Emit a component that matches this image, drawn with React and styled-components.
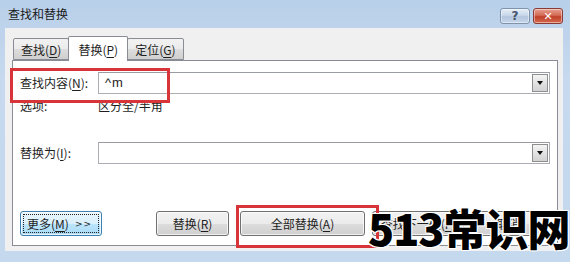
import React from 'react';
import styled, { createGlobalStyle } from 'styled-components';

const Global = createGlobalStyle`
  html, body { margin: 0; padding: 0; }
  body {
    font-family: "Noto Sans CJK SC", "Microsoft YaHei", sans-serif;
    font-size: 12px;
    color: #1e1e1e;
  }
`;

const Frame = styled.div`
  position: relative;
  width: 570px;
  height: 262px;
  box-sizing: border-box;
  background: linear-gradient(180deg, #b9d0ea 0%, #c6d9ee 30%, #c4d8ee 100%);
  display: flex;
  flex-direction: column;
  overflow: hidden;
`;

const TitleBar = styled.div`
  height: 28px;
  display: flex;
  align-items: flex-start;
  justify-content: space-between;
  padding: 0 7px 0 8px;
`;

const Title = styled.div`
  margin-top: 6px;
  font-size: 12px;
  line-height: 16px;
  color: #1a1a1a;
`;

const Caption = styled.div`
  display: flex;
  gap: 3px;
  margin-top: 8px;
`;

const CapButton = styled.div`
  width: 30px;
  height: 16px;
  box-sizing: border-box;
  border: 1px solid ${p => (p.$close ? '#8a3a34' : '#7f93ad')};
  border-radius: 3px;
  background: ${p =>
    p.$close
      ? 'linear-gradient(180deg, #e8a08f 0%, #d46a55 45%, #c0402a 55%, #d46a50 100%)'
      : 'linear-gradient(180deg, #e4edf7 0%, #c9d8ea 45%, #b3c6de 55%, #c7d7ea 100%)'};
  display: flex;
  align-items: center;
  justify-content: center;
  color: ${p => (p.$close ? '#fff' : '#44546b')};
  font-family: "DejaVu Sans", sans-serif;
  font-weight: bold;
  font-size: ${p => (p.$close ? '11px' : '12px')};
  line-height: 1;
  box-shadow: inset 0 0 0 1px rgba(255,255,255,0.45);
`;

const Body = styled.div`
  position: relative;
  margin: 0 7px 0 5px;
  height: 223px;
  background: #f0f0f0;
  padding: 8px 5px 0 7px;
  box-sizing: border-box;
  display: flex;
  flex-direction: column;
`;

const Tabs = styled.div`
  display: flex;
  align-items: flex-end;
  height: 24px;
  padding-left: 1px;
`;

const Tab = styled.div`
  height: ${p => (p.$active ? '25px' : '22px')};
  margin-bottom: ${p => (p.$active ? '-1px' : '0')};
  padding: 0 ${p => (p.$active ? '9px' : '7px')};
  box-sizing: border-box;
  border: 1px solid #898c95;
  border-bottom: ${p => (p.$active ? 'none' : '1px solid #898c95')};
  margin-left: ${p => (p.$active ? '-1px' : '0')};
  margin-right: ${p => (p.$active ? '-1px' : '0')};
  background: ${p => (p.$active ? '#ffffff' : 'linear-gradient(180deg, #f2f2f2 0%, #ebebeb 50%, #dddddd 51%, #cfcfcf 100%)')};
  display: flex;
  align-items: center;
  white-space: nowrap;
  font-size: 12px;
  position: relative;
  z-index: ${p => (p.$active ? 2 : 1)};
  border-radius: 2px 2px 0 0;
`;

const Key = styled.span`
  text-decoration: underline;
  text-underline-offset: 2px;
`;

const Panel = styled.div`
  position: relative;
  height: 186px;
  box-sizing: border-box;
  background: #fff;
  border: 1px solid #898c95;
  padding: 11px 7px 0 7px;
  display: flex;
  flex-direction: column;
`;

const Row = styled.div`
  display: flex;
  align-items: center;
  height: 22px;
  line-height: 14px;
  margin-top: ${p => p.$mt || 0}px;
`;

const Label = styled.div`
  width: 78px;
  flex-shrink: 0;
  font-size: 12px;
  white-space: nowrap;
`;

const Combo = styled.div`
  flex: 1;
  height: 22px;
  box-sizing: border-box;
  border: 1px solid #abadb3;
  border-top-color: #9a9ca3;
  display: flex;
  align-items: center;
  justify-content: space-between;
  padding: 0 1px 0 6px;
  background: #fff;
`;

const ComboText = styled.span`
  font-family: "Liberation Sans", Arial, sans-serif;
  font-size: 13px;
  letter-spacing: 1px;
`;

const DropBtn = styled.div`
  width: 16px;
  height: 18px;
  box-sizing: border-box;
  border: 1px solid #8e8f8f;
  background: linear-gradient(180deg, #f4f4f4 0%, #e3e3e3 50%, #d2d2d2 100%);
  display: flex;
  align-items: center;
  justify-content: center;
`;

const Arrow = styled.div`
  width: 0;
  height: 0;
  border-left: 3.5px solid transparent;
  border-right: 3.5px solid transparent;
  border-top: 4px solid #111;
`;

const Buttons = styled.div`
  display: flex;
  align-items: center;
  height: 25px;
  margin-top: auto;
  margin-bottom: 9px;
`;

const Btn = styled.div`
  width: ${p => p.$w}px;
  flex-shrink: 0;
  margin-left: ${p => p.$ml || 0}px;
  height: 25px;
  box-sizing: border-box;
  border: 1px solid ${p => (p.$focus ? '#3c7fb1' : '#707070')};
  border-radius: 3px;
  background: ${p =>
    p.$focus
      ? 'linear-gradient(180deg, #eaf6fd 0%, #d9f0fc 50%, #bee6fd 51%, #a7d9f5 100%)'
      : 'linear-gradient(180deg, #f2f2f2 0%, #ebebeb 50%, #dddddd 51%, #cfcfcf 100%)'};
  box-shadow: inset 0 0 0 1px rgba(255,255,255,0.7);
  display: flex;
  align-items: center;
  justify-content: ${p => (p.$focus ? 'flex-start' : 'center')};
  font-size: 12px;
  line-height: 14px;
  white-space: nowrap;
  padding: 2px;
  position: relative;
`;

const FocusRing = styled.div`
  flex: 1;
  align-self: stretch;
  border: 1px dotted #222;
  display: flex;
  align-items: center;
  padding-left: 3px;
  white-space: nowrap;
`;

const Chevrons = styled.span`
  font-family: "DejaVu Sans", sans-serif;
  font-size: 9px;
  letter-spacing: 1px;
  margin-left: 6px;
`;

const Highlight = styled.div`
  position: absolute;
  border: 3px solid #d8353a;
  pointer-events: none;
  z-index: 5;
`;

const Watermark = styled.div`
  position: absolute;
  left: 368px;
  top: 202px;
  font-family: "Noto Sans CJK SC", sans-serif;
  font-weight: 900;
  font-size: 43px;
  line-height: 50px;
  color: #000;
  letter-spacing: -1px;
  white-space: nowrap;
  text-shadow: 1px 1px 0 #fff, -1px -1px 0 #fff, 1px -1px 0 #fff, -1px 1px 0 #fff;
  z-index: 10;
`;

export default function App() {
  return (
    <Frame>
      <Global />
      <TitleBar>
        <Title>查找和替换</Title>
        <Caption>
          <CapButton>?</CapButton>
          <CapButton $close>✕</CapButton>
        </Caption>
      </TitleBar>
      <Body>
        <Tabs>
          <Tab>查找(<Key>D</Key>)</Tab>
          <Tab $active>替换(<Key>P</Key>)</Tab>
          <Tab>定位(<Key>G</Key>)</Tab>
        </Tabs>
        <Panel>
          <Row>
            <Label>查找内容(<Key>N</Key>):</Label>
            <Combo>
              <ComboText>^m</ComboText>
              <DropBtn><Arrow /></DropBtn>
            </Combo>
          </Row>
          <Row $mt={1}>
            <Label>选项:</Label>
            <span>区分全/半角</span>
          </Row>
          <Row $mt={25}>
            <Label>替换为(<Key>I</Key>):</Label>
            <Combo>
              <span />
              <DropBtn><Arrow /></DropBtn>
            </Combo>
          </Row>
          <Buttons>
            <Btn $w={82} $focus>
              <FocusRing>更多(<Key>M</Key>)<Chevrons>&gt;&gt;</Chevrons></FocusRing>
            </Btn>
            <Btn $w={73} $ml={54}>替换(<Key>R</Key>)</Btn>
            <Btn $w={125} $ml={11}>全部替换(<Key>A</Key>)</Btn>
            <Btn $w={92} $ml={7}>查找下一处(<Key>F</Key>)</Btn>
            <Btn $w={73} $ml={8}>取消</Btn>
          </Buttons>
          <Highlight style={{ left: -3, top: 7, width: 154, height: 29 }} />
        </Panel>
      </Body>
      <Highlight style={{ left: 236, top: 205, width: 137, height: 37 }} />
      <Watermark>513常识网</Watermark>
    </Frame>
  );
}
